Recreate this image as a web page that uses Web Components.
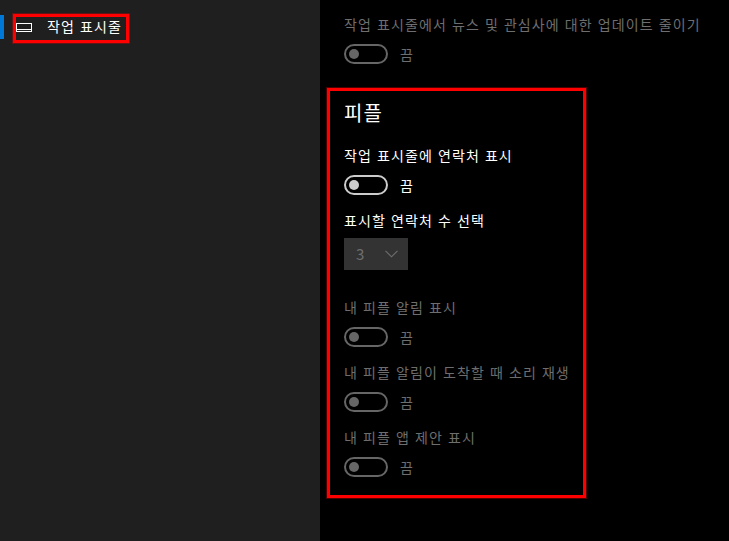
<!DOCTYPE html>
<html lang="ko">
<head>
<meta charset="utf-8">
<title>작업 표시줄</title>
<style>
  html, body { margin: 0; height: 100%; background: #000; }
  body {
    display: flex;
    height: 541px;
    overflow: hidden;
    font: 14px/20px "Noto Sans CJK KR", "Noto Sans", sans-serif;
    letter-spacing: 1.1px;
    color: #fff;
  }
</style>
</head>
<body>
<nav-sidebar>
  <nav-item label="작업 표시줄"></nav-item>
</nav-sidebar>
<settings-page>
  <setting-toggle label="작업 표시줄에서 뉴스 및 관심사에 대한 업데이트 줄이기" disabled></setting-toggle>
  <people-section heading="피플">
    <setting-toggle label="작업 표시줄에 연락처 표시"></setting-toggle>
    <setting-select label="표시할 연락처 수 선택" value="3"></setting-select>
    <setting-toggle label="내 피플 알림 표시" disabled></setting-toggle>
    <setting-toggle label="내 피플 알림이 도착할 때 소리 재생" disabled></setting-toggle>
    <setting-toggle label="내 피플 앱 제안 표시" disabled></setting-toggle>
  </people-section>
</settings-page>

<script>
class NavSidebar extends HTMLElement {
  constructor() {
    super();
    this.attachShadow({mode: 'open'}).innerHTML = `
      <style>
        :host { display: block; flex: 0 0 320px; background: #1f1f1f; padding-top: 14px; box-sizing: border-box; }
      </style>
      <slot></slot>
    `;
  }
}

class NavItem extends HTMLElement {
  constructor() {
    super();
    this.attachShadow({mode: 'open'});
  }

  connectedCallback() {
    this.shadowRoot.innerHTML = `
      <style>
        :host { display: flex; align-items: center; height: 29px; }
        .bar { width: 4px; height: 24px; background: #0078d7; margin: 0 9px 3px 0; }
        .box {
          display: flex;
          align-items: center;
          box-sizing: border-box;
          width: 116px;
          height: 29px;
          border: 3px solid #f00;
          box-shadow: 0 0 0 1px rgba(255, 0, 0, .3);
          padding: 0 0 3px 0;
        }
        svg { display: block; margin-right: 15px; }
        span { white-space: nowrap; padding-bottom: 2px; }
      </style>
      <div class="bar"></div>
      <div class="box">
        <svg width="16" height="9" viewBox="0 0 16 9" fill="none" stroke="#fff">
          <rect x="0.5" y="0.5" width="15" height="8"/>
          <path d="M0 6.5h16" />
        </svg>
        <span>${this.getAttribute('label')}</span>
      </div>
    `;
  }
}

class SettingsPage extends HTMLElement {
  constructor() {
    super();
    this.attachShadow({mode: 'open'}).innerHTML = `
      <style>
        :host { display: flex; flex-direction: column; flex: 1; padding: 15px 0 0 7px; }
        ::slotted(setting-toggle) { margin-left: 17px; }
      </style>
      <slot></slot>
    `;
  }
}

class PeopleSection extends HTMLElement {
  constructor() {
    super();
    this.attachShadow({mode: 'open'});
  }

  connectedCallback() {
    this.shadowRoot.innerHTML = `
      <style>
        :host {
          display: flex;
          flex-direction: column;
          gap: 16px;
          box-sizing: border-box;
          width: 259px;
          height: 410px;
          margin-top: 24px;
          border: 3px solid #f00;
          box-shadow: 0 0 0 1px rgba(255, 0, 0, .3);
          padding: 5px 0 0 14px;
        }
        h2 { margin: 2px 0 2px; font-size: 20px; line-height: 30px; font-weight: 400; color: #fff; }
      </style>
      <h2>${this.getAttribute('heading')}</h2>
      <slot></slot>
    `;
  }
}

class SettingToggle extends HTMLElement {
  constructor() {
    super();
    this.attachShadow({mode: 'open'});
  }

  connectedCallback() {
    this.shadowRoot.innerHTML = `
      <style>
        :host { display: block; color: #fff; --line: #ccc; }
        :host([disabled]) { color: #6e6e6e; --line: #666; }
        .label { white-space: nowrap; line-height: 18px; }
        .row { display: flex; align-items: center; margin-top: 11px; height: 20px; }
        .switch {
          box-sizing: border-box;
          width: 44px;
          height: 20px;
          border: 2px solid var(--line);
          border-radius: 10px;
          display: flex;
          align-items: center;
          padding-left: 3px;
          margin-right: 12px;
        }
        .knob { width: 10px; height: 10px; border-radius: 50%; background: var(--line); }
      </style>
      <div class="label">${this.getAttribute('label')}</div>
      <div class="row">
        <div class="switch"><div class="knob"></div></div>
        <span>끔</span>
      </div>
    `;
  }
}

class SettingSelect extends HTMLElement {
  constructor() {
    super();
    this.attachShadow({mode: 'open'});
  }

  connectedCallback() {
    this.shadowRoot.innerHTML = `
      <style>
        :host { display: block; margin-bottom: 12px; }
        .label { white-space: nowrap; line-height: 18px; color: #fff; }
        .box {
          display: flex;
          align-items: center;
          justify-content: space-between;
          box-sizing: border-box;
          width: 64px;
          height: 32px;
          margin-top: 9px;
          padding: 0 10px 0 12px;
          background: #333;
          color: #6e6e6e;
          font-size: 15px;
        }
        svg { display: block; }
      </style>
      <div class="label">${this.getAttribute('label')}</div>
      <div class="box">
        <span>${this.getAttribute('value')}</span>
        <svg width="13" height="8" viewBox="0 0 13 8" fill="none" stroke="#6e6e6e" stroke-width="1.1">
          <path d="M0.5 0.8 L6.5 6.8 L12.5 0.8"/>
        </svg>
      </div>
    `;
  }
}

customElements.define('nav-sidebar', NavSidebar);
customElements.define('nav-item', NavItem);
customElements.define('settings-page', SettingsPage);
customElements.define('people-section', PeopleSection);
customElements.define('setting-toggle', SettingToggle);
customElements.define('setting-select', SettingSelect);
</script>
</body>
</html>
